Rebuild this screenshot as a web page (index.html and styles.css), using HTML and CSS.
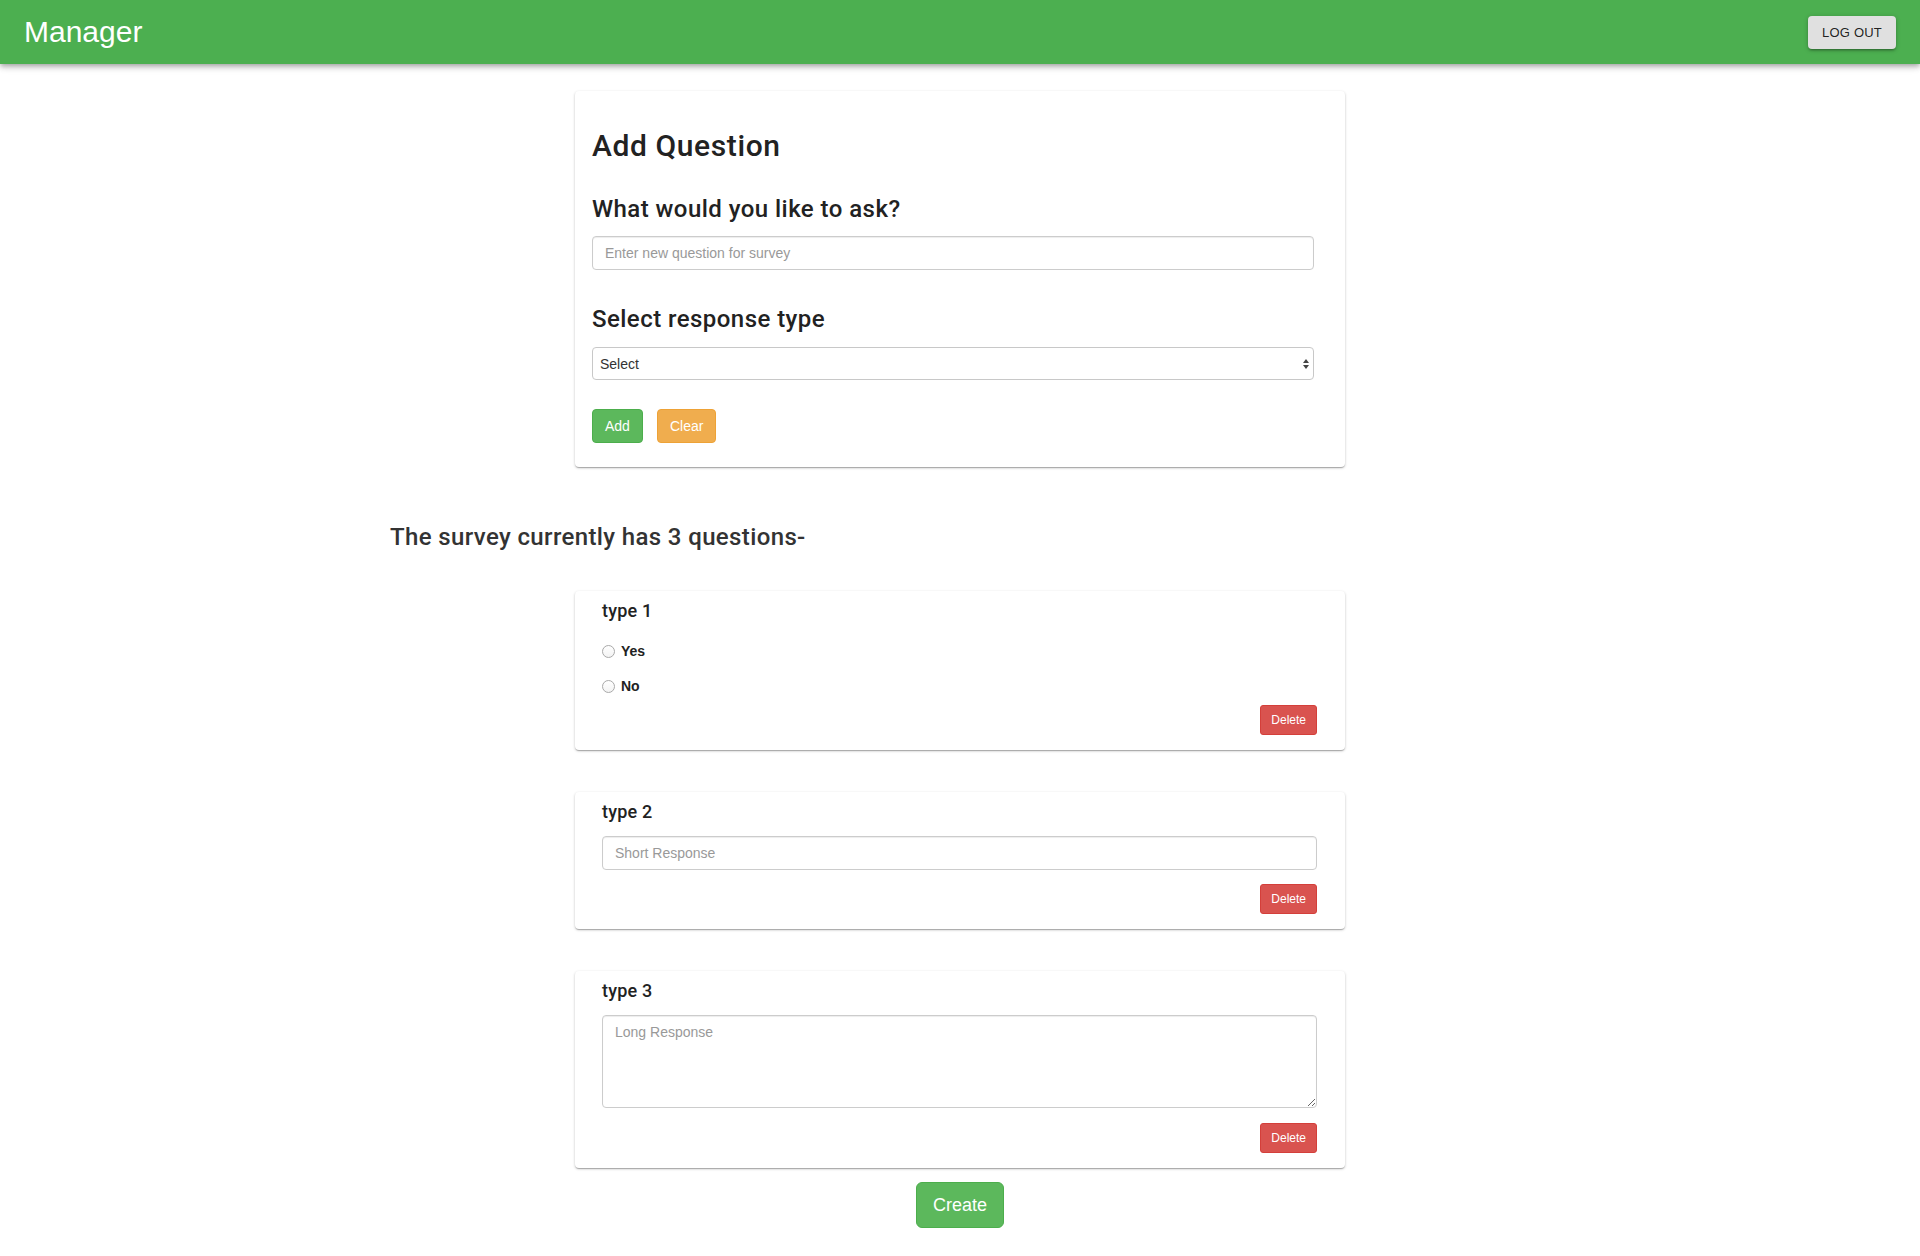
FILE: index.html
```html
<!DOCTYPE html>
<html lang="en">
<head>
<meta charset="utf-8">
<title>Manager</title>
<link rel="stylesheet" href="styles.css">
</head>
<body>
<header class="appbar">
  <div class="brand">Manager</div>
  <button class="logout" type="button">LOG OUT</button>
</header>
<main class="container">
  <section class="card card-form">
    <h2 class="title">Add Question</h2>
    <h3 class="label label-ask">What would you like to ask?</h3>
    <input class="field field-ask" type="text" placeholder="Enter new question for survey">
    <h3 class="label label-type">Select response type</h3>
    <div class="select-wrap">
      <select class="field select"><option>Select</option></select>
      <svg class="arrows" width="8" height="12" viewBox="0 0 8 12" aria-hidden="true">
        <path d="M4 1 L7 5 L1 5 Z" fill="#444"/>
        <path d="M4 11 L7 7 L1 7 Z" fill="#444"/>
      </svg>
    </div>
    <div class="actions">
      <button class="btn btn-success" type="button">Add</button>
      <button class="btn btn-warning" type="button">Clear</button>
    </div>
  </section>

  <h3 class="summary">The survey currently has 3 questions-</h3>

  <section class="card q-card q-first">
    <h4 class="q-title">type 1</h4>
    <label class="radio-row radio-yes"><input class="radio" type="radio" name="q1"><span>Yes</span></label>
    <label class="radio-row radio-no"><input class="radio" type="radio" name="q1"><span>No</span></label>
    <div class="row-end row-end-radio"><button class="btn btn-danger btn-sm" type="button">Delete</button></div>
  </section>

  <section class="card q-card">
    <h4 class="q-title">type 2</h4>
    <input class="field field-q" type="text" placeholder="Short Response">
    <div class="row-end"><button class="btn btn-danger btn-sm" type="button">Delete</button></div>
  </section>

  <section class="card q-card">
    <h4 class="q-title">type 3</h4>
    <textarea class="field area" placeholder="Long Response"></textarea>
    <div class="row-end row-end-area"><button class="btn btn-danger btn-sm" type="button">Delete</button></div>
  </section>

  <div class="create-row">
    <button class="btn btn-success btn-lg" type="button">Create</button>
  </div>
</main>
</body>
</html>
```

FILE: styles.css
```css
* { box-sizing: border-box; }

html, body {
  margin: 0;
  padding: 0;
  background: #fff;
}

body {
  font-family: "Liberation Sans", Arial, Helvetica, sans-serif;
  font-size: 14px;
  color: #333;
  overflow: hidden;
}

.appbar {
  height: 64px;
  background: #4caf50;
  display: flex;
  align-items: center;
  justify-content: space-between;
  padding: 0 24px 0 24px;
  box-shadow: 0 2px 4px -1px rgba(0,0,0,0.2), 0 4px 5px 0 rgba(0,0,0,0.14), 0 1px 10px 0 rgba(0,0,0,0.12);
  position: relative;
  z-index: 2;
}

.brand {
  color: #fff;
  font-size: 30px;
  line-height: 64px;
}

.logout {
  width: 88px;
  height: 33px;
  border: 0;
  border-radius: 4px;
  background: #e0e0e0;
  color: rgba(0,0,0,0.87);
  font-family: "Liberation Sans", Arial, sans-serif;
  font-size: 13px;
  letter-spacing: 0.2px;
  padding: 0;
  margin-top: 1px;
  box-shadow: 0 1px 5px 0 rgba(0,0,0,0.2), 0 2px 2px 0 rgba(0,0,0,0.14), 0 3px 1px -2px rgba(0,0,0,0.12);
}

.container {
  width: 1140px;
  margin: 0 auto;
  padding-top: 27px;
}

.card {
  width: 770px;
  margin: 0 auto;
  background: #fff;
  border-radius: 4px;
  box-shadow: 0 1px 3px 0 rgba(0,0,0,0.2), 0 1px 1px 0 rgba(0,0,0,0.14), 0 2px 1px -1px rgba(0,0,0,0.12);
}

.card-form {
  padding: 38px 31px 24px 17px;
}

.title,
.label,
.summary,
.q-title {
  font-family: Roboto, "Liberation Sans", Arial, sans-serif;
  font-weight: 500;
}

.title {
  margin: 0;
  font-size: 30px;
  line-height: 33px;
  color: #222;
  letter-spacing: 0.6px;
}

.label {
  margin: 0;
  font-size: 24px;
  line-height: 26px;
  color: #222;
  letter-spacing: 0.45px;
}

.label-ask { margin-top: 34px; }
.label-type { margin-top: 36px; }

.field {
  display: block;
  width: 100%;
  height: 34px;
  padding: 6px 12px;
  border: 1px solid #ccc;
  border-radius: 4px;
  background: #fff;
  font-family: "Liberation Sans", Arial, sans-serif;
  font-size: 14px;
  line-height: 20px;
  color: #555;
  box-shadow: inset 0 1px 1px rgba(0,0,0,0.075);
  outline: none;
}

.field::placeholder { color: #999; }

.field-ask { margin-top: 14px; }

.select-wrap {
  position: relative;
  margin-top: 15px;
}

.select {
  height: 33px;
  padding: 0 24px 0 7px;
  -webkit-appearance: none;
  appearance: none;
  color: #333;
  font-size: 14px;
  box-shadow: none;
  border-color: #c8c8c8;
}

.arrows {
  position: absolute;
  right: 4px;
  top: 11px;
}

.actions {
  display: flex;
  gap: 14px;
  margin-top: 29px;
}

.btn {
  display: inline-block;
  height: 34px;
  padding: 6px 12px;
  border: 1px solid transparent;
  border-radius: 4px;
  font-family: "Liberation Sans", Arial, sans-serif;
  font-size: 14px;
  line-height: 20px;
  color: #fff;
  cursor: pointer;
}

.btn-success { background: #5cb85c; border-color: #4cae4c; }
.btn-warning { background: #f0ad4e; border-color: #eea236; }
.btn-danger { background: #d9534f; border-color: #d43f3a; }

.btn-sm {
  height: 30px;
  padding: 5px 10px;
  font-size: 12px;
  line-height: 18px;
  border-radius: 3px;
}

.btn-lg {
  height: 46px;
  padding: 10px 16px;
  font-size: 18px;
  line-height: 24px;
  border-radius: 6px;
}

.summary {
  margin: 57px 0 0 0;
  font-size: 24px;
  line-height: 26px;
  color: #333;
  letter-spacing: 0.37px;
}

.q-card {
  margin-top: 42px;
  padding: 10px 28px 15px 27px;
}

.q-first { margin-top: 41px; }

.q-title {
  margin: 0;
  font-size: 18px;
  line-height: 20px;
  color: #222;
  letter-spacing: 0.2px;
}

.radio-row {
  display: flex;
  align-items: center;
  height: 20px;
  font-weight: bold;
  font-size: 14px;
  color: #222;
}

.radio-yes { margin-top: 20px; }
.radio-no { margin-top: 15px; }

.radio {
  -webkit-appearance: none;
  appearance: none;
  width: 13px;
  height: 13px;
  margin: 0 6px 0 0;
  border: 1px solid #a9a9a9;
  border-radius: 50%;
  background: linear-gradient(#fff, #f3f3f3);
}

.field-q { margin-top: 14px; }

.area {
  margin-top: 14px;
  height: 93px;
  resize: vertical;
}

.row-end {
  display: flex;
  justify-content: flex-end;
  margin-top: 14px;
}

.row-end-radio { margin-top: 9px; }
.row-end-area { margin-top: 15px; }

.create-row {
  display: flex;
  justify-content: center;
  margin-top: 14px;
}
```
